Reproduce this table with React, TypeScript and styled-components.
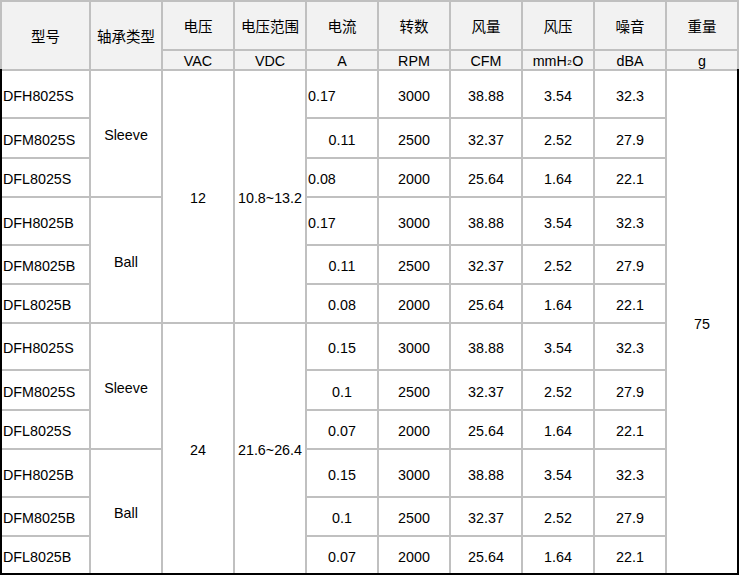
import React from "react";
import styled, { createGlobalStyle } from "styled-components";

const Global = createGlobalStyle`
  html, body { margin: 0; padding: 0; background: #fff; }
  body { font-family: "Liberation Sans", Arial, "Noto Sans CJK SC", sans-serif; color: #000; }
`;

const LINE = "#c0c0c0";
const COLS = "87px repeat(9, 70px)";

const Sheet = styled.div`
  width: 739px;
  display: flex;
  flex-direction: column;
`;

const Header = styled.div`
  display: grid;
  grid-template-columns: ${COLS};
  grid-template-rows: 47px 18px;
  gap: 2px;
  padding: 2px 2px 0 2px;
  background: ${LINE};
`;

const Body = styled.div`
  display: grid;
  grid-template-columns: ${COLS};
  grid-template-rows: 46px 38px 37px 46px 37px 37px 45px 38px 37px 46px 37px 36px;
  gap: 2px;
  padding-top: 2px;
  background: ${LINE};
  border: 2px solid #000;
  border-top: none;
`;

const HeadCell = styled.div<{ $rows?: number }>`
  grid-row: span ${(p) => p.$rows ?? 1};
  background: #f2f2f2;
  display: flex;
  align-items: center;
  justify-content: center;
  padding-top: 2px;
  font-family: "Liberation Sans", Arial, "Noto Sans CJK SC", sans-serif;
  font-size: 14.3px;
  line-height: 16px;
  white-space: nowrap;
`;

const CnLabel = styled.span`
  font-family: "Noto Sans CJK SC", "Liberation Sans", sans-serif;
  font-size: 14.5px;
  position: relative;
  top: -1px;
`;

const Sub = styled.span`
  font-size: 8px;
  position: relative;
  top: 2px;
  margin: 0 0.5px;
`;

const Cell = styled.div<{ $rows?: number; $align?: "left" | "center" }>`
  grid-row: span ${(p) => p.$rows ?? 1};
  background: #fff;
  display: flex;
  align-items: center;
  justify-content: ${(p) => (p.$align === "left" ? "flex-start" : "center")};
  padding: 3px ${(p) => (p.$align === "left" ? "1px" : "0")} 0;
  font-size: 14.3px;
  line-height: 16px;
  white-space: nowrap;
`;

type Row = {
  model: string;
  a: string;
  aLeft: boolean;
  rpm: string;
  cfm: string;
  p: string;
  dba: string;
};

const base = [
  { rpm: "3000", cfm: "38.88", p: "3.54", dba: "32.3" },
  { rpm: "2500", cfm: "32.37", p: "2.52", dba: "27.9" },
  { rpm: "2000", cfm: "25.64", p: "1.64", dba: "22.1" },
];

const models = (suffix: string) => [`DFH8025${suffix}`, `DFM8025${suffix}`, `DFL8025${suffix}`];

const makeGroup = (suffix: string, amps: [string, boolean][]): Row[] =>
  models(suffix).map((model, i) => ({ model, a: amps[i][0], aLeft: amps[i][1], ...base[i] }));

const groups: { bearing: string; rows: Row[] }[] = [
  { bearing: "Sleeve", rows: makeGroup("S", [["0.17", true], ["0.11", false], ["0.08", true]]) },
  { bearing: "Ball", rows: makeGroup("B", [["0.17", true], ["0.11", false], ["0.08", false]]) },
  { bearing: "Sleeve", rows: makeGroup("S", [["0.15", false], ["0.1", false], ["0.07", false]]) },
  { bearing: "Ball", rows: makeGroup("B", [["0.15", false], ["0.1", false], ["0.07", false]]) },
];

const voltage = [
  { vac: "12", vdc: "10.8~13.2" },
  { vac: "24", vdc: "21.6~26.4" },
];

export default function App() {
  const cells: React.ReactNode[] = [];
  groups.forEach((g, gi) => {
    g.rows.forEach((r, ri) => {
      const k = `${gi}-${ri}`;
      cells.push(<Cell key={`m${k}`} $align="left">{r.model}</Cell>);
      if (ri === 0) cells.push(<Cell key={`b${k}`} $rows={3}>{g.bearing}</Cell>);
      if (ri === 0 && gi % 2 === 0) {
        const v = voltage[gi / 2];
        cells.push(<Cell key={`v${k}`} $rows={6}>{v.vac}</Cell>);
        cells.push(<Cell key={`d${k}`} $rows={6}>{v.vdc}</Cell>);
      }
      cells.push(<Cell key={`a${k}`} $align={r.aLeft ? "left" : "center"}>{r.a}</Cell>);
      cells.push(<Cell key={`r${k}`}>{r.rpm}</Cell>);
      cells.push(<Cell key={`c${k}`}>{r.cfm}</Cell>);
      cells.push(<Cell key={`p${k}`}>{r.p}</Cell>);
      cells.push(<Cell key={`n${k}`}>{r.dba}</Cell>);
      if (gi === 0 && ri === 0) cells.push(<Cell key="w" $rows={12}>75</Cell>);
    });
  });

  return (
    <>
      <Global />
      <Sheet>
        <Header>
          <HeadCell $rows={2}><CnLabel>型号</CnLabel></HeadCell>
          <HeadCell $rows={2}><CnLabel>轴承类型</CnLabel></HeadCell>
          <HeadCell><CnLabel>电压</CnLabel></HeadCell>
          <HeadCell><CnLabel>电压范围</CnLabel></HeadCell>
          <HeadCell><CnLabel>电流</CnLabel></HeadCell>
          <HeadCell><CnLabel>转数</CnLabel></HeadCell>
          <HeadCell><CnLabel>风量</CnLabel></HeadCell>
          <HeadCell><CnLabel>风压</CnLabel></HeadCell>
          <HeadCell><CnLabel>噪音</CnLabel></HeadCell>
          <HeadCell><CnLabel>重量</CnLabel></HeadCell>
          <HeadCell>VAC</HeadCell>
          <HeadCell>VDC</HeadCell>
          <HeadCell>A</HeadCell>
          <HeadCell>RPM</HeadCell>
          <HeadCell>CFM</HeadCell>
          <HeadCell>mmH<Sub>2</Sub>O</HeadCell>
          <HeadCell>dBA</HeadCell>
          <HeadCell>g</HeadCell>
        </Header>
        <Body>{cells}</Body>
      </Sheet>
    </>
  );
}
